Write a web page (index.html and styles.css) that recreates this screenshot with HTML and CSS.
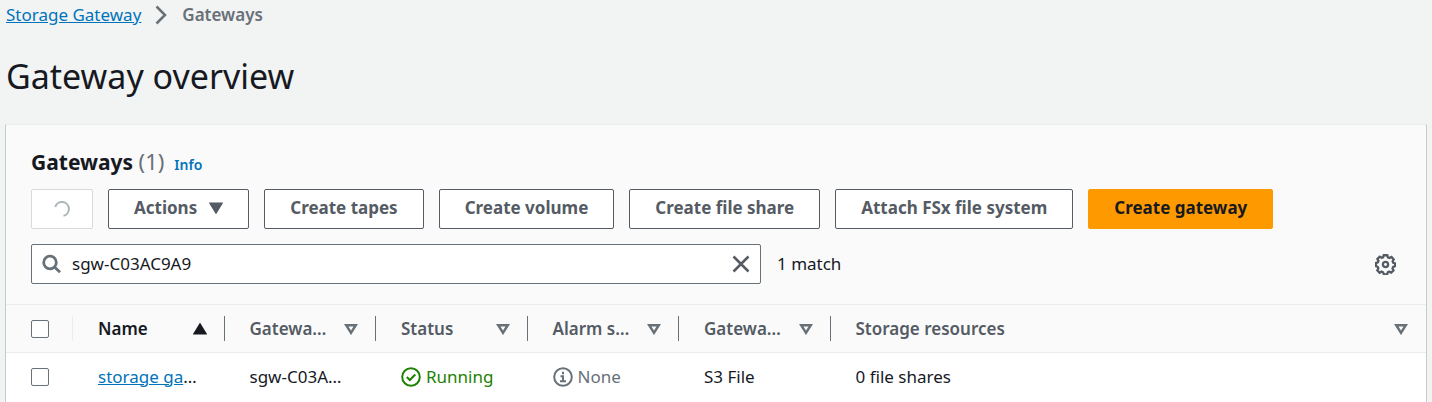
FILE: index.html
```html
<!DOCTYPE html>
<html lang="en">
<head>
<meta charset="utf-8">
<title>Gateway overview</title>
<link rel="stylesheet" href="styles.css">
</head>
<body>
<nav class="breadcrumbs" aria-label="Breadcrumbs">
  <a class="link" href="#">Storage Gateway</a>
  <svg class="chevron" viewBox="0 0 12 20" aria-hidden="true"><path d="M1.5 1.5 10 10 1.5 18.500"/></svg>
  <span class="current">Gateways</span>
</nav>
<h1 class="page-title">Gateway overview</h1>
<main class="panel">
  <header class="panel-header">
    <div class="heading">
      <h2 class="title">Gateways <span class="count">(1)</span></h2>
      <a class="info" href="#">Info</a>
    </div>
    <div class="actions">
      <button class="btn btn-loading" disabled aria-label="Refresh">
        <svg class="spinner" viewBox="0 0 16 16"><path d="M1.200 6A7 7 0 1 1 9.500 14.800"/></svg>
      </button>
      <button class="btn btn-menu">Actions <svg class="caret" viewBox="0 0 14 12"><path d="M1.500 1.500h11L7 10.500z" fill="currentColor"/></svg></button>
      <button class="btn">Create tapes</button>
      <button class="btn">Create volume</button>
      <button class="btn">Create file share</button>
      <button class="btn">Attach FSx file system</button>
      <button class="btn btn-primary">Create gateway</button>
    </div>
    <div class="filter">
      <div class="search">
        <svg class="search-icon" viewBox="0 0 20 20" aria-hidden="true"><circle cx="8" cy="8.500" r="6.300"/><path d="M12.500 13l5.500 5.200"/></svg>
        <input class="search-input" type="text" aria-label="Find gateways" value="sgw-C03AC9A9">
        <button class="icon-btn" aria-label="Clear"><svg class="close" viewBox="0 0 18 18"><path d="M1.500 1.500l15 15M16.500 1.500l-15 15"/></svg></button>
      </div>
      <span class="matches">1 match</span>
      <button class="icon-btn settings" aria-label="Preferences">
        <svg class="gear" viewBox="0 0 20 20"><path d="M8.300 1.200h3.400l.6 2 1.500.6 1.900-1 2.100 2.300-1 1.800.6 1.500 1.800.5v2.700l-1.900.7-.6 1.500.9 1.900-2.200 2.100-1.900-1-1.300.6-.6 2H8.400l-.7-2-1.500-.6-1.800 1-2.200-2.300 1-1.700-.6-1.600-1.800-.6V8.600l1.900-.6.6-1.500-1-1.700 2.200-2.200 1.800 1 1.400-.5z"/><circle cx="10" cy="10" r="2.500"/></svg>
      </button>
    </div>
  </header>
  <table class="grid">
    <colgroup><col class="col-check"><col class="col"><col class="col"><col class="col"><col class="col"><col class="col"><col></colgroup>
    <thead>
      <tr>
        <th class="check"><input class="box" type="checkbox" aria-label="Select all"></th>
        <th class="sorted"><div class="head">Name <svg class="caret" viewBox="0 0 14 12"><path d="M7 1.500l5.500 9h-11z" fill="currentColor"/></svg></div></th>
        <th><div class="head">Gatewa… <svg class="caret sort" viewBox="0 0 14 12"><path d="M2.200 2.200h9.600L7 9.800z"/></svg></div></th>
        <th><div class="head">Status <svg class="caret sort" viewBox="0 0 14 12"><path d="M2.200 2.200h9.600L7 9.800z"/></svg></div></th>
        <th><div class="head">Alarm s… <svg class="caret sort" viewBox="0 0 14 12"><path d="M2.200 2.200h9.600L7 9.800z"/></svg></div></th>
        <th><div class="head">Gatewa… <svg class="caret sort" viewBox="0 0 14 12"><path d="M2.200 2.200h9.600L7 9.800z"/></svg></div></th>
        <th><div class="head">Storage resources <svg class="caret sort" viewBox="0 0 14 12"><path d="M2.200 2.200h9.600L7 9.800z"/></svg></div></th>
      </tr>
    </thead>
    <tbody>
      <tr>
        <td class="check"><input class="box" type="checkbox" aria-label="Select gateway"></td>
        <td><a class="link" href="#">storage ga</a>…</td>
        <td>sgw-C03A…</td>
        <td><span class="status ok"><svg class="state" viewBox="0 0 20 20"><circle cx="10" cy="10" r="8.800"/><path d="M5.800 10l3 3 5.500-5.500"/></svg>Running</span></td>
        <td><span class="status none"><svg class="state" viewBox="0 0 20 20"><circle cx="10" cy="10" r="8.800"/><path d="M10 4.800v2.400M7.500 9.200H10v5M7 14.200h6"/></svg>None</span></td>
        <td>S3 File</td>
        <td>0 file shares</td>
      </tr>
    </tbody>
  </table>
</main>
</body>
</html>
```
FILE: styles.css
```css
* { box-sizing: border-box; }
body {
  margin: 0;
  padding: 4px 5px 0;
  background: #f2f3f3;
  color: #16191f;
  font: 17px/22px "Noto Sans", sans-serif;
}
svg { display: block; flex: none; fill: none; stroke: currentColor; stroke-width: 2; }
h1, h2 { margin: 0; }
.link { color: #0073bb; }
.breadcrumbs { display: flex; align-items: center; padding-left: 1px; }
.chevron { width: 12px; height: 20px; margin: 0 15px 0 14px; color: #687078; stroke-width: 2.500; }
.current { color: #687078; font-weight: 600; }
.page-title { padding: 28px 0 26px 1px; font-size: 34px; line-height: 44px; font-weight: 400; }
.panel { background: #fff; border: 1px solid #c5cccc; border-top-color: #eaeded; border-bottom: 0; min-height: 278px; }
.panel-header { padding: 21px 30px 20px 25px; background: #fafafa; }
.heading { display: flex; align-items: baseline; gap: 10px; line-height: 30px; }
.title { font-size: 21px; font-weight: 700; }
.count { color: #687078; font-size: 22px; font-weight: 400; }
.info { color: #0073bb; font-size: 14px; font-weight: 600; text-decoration: none; }
.actions { display: flex; flex-wrap: wrap; gap: 15px; margin: 9px 0 15px; }
.btn {
  display: flex; align-items: center; justify-content: center; height: 40px; padding: 0 25px 2px;
  border: 1px solid #545b64; border-radius: 2px; background: #fff; color: #545b64;
  font: 700 17px/22px "Noto Sans", sans-serif; white-space: nowrap;
}
.btn-loading { width: 62px; padding-bottom: 0; border-color: #d5dbdb; color: #aab7b8; }
.spinner { width: 16px; height: 16px; }
.btn-menu { gap: 12px; }
.caret { width: 14px; height: 12px; }
.sort { color: #687078; stroke-width: 2.500; }
.btn-primary { background: #ff9900; border-color: #ff9900; color: #16191f; }
.filter { display: flex; align-items: center; }
.search {
  display: flex; align-items: center; width: 730px; height: 40px; padding: 0 10px;
  border: 1px solid #687078; border-radius: 2px; background: #fff;
}
.search-icon { width: 20px; height: 20px; color: #687078; stroke-width: 2.800; }
.search-input { flex: 1; min-width: 0; padding: 0 10px; border: 0; outline: 0; background: none; color: #16191f; font: inherit; }
.icon-btn { padding: 0; border: 0; background: none; color: #545b64; }
.close { width: 18px; height: 18px; stroke-width: 2.500; }
.matches { margin-left: 16px; }
.settings { margin-left: auto; }
.gear { width: 21px; height: 21px; stroke-width: 2.200; }
.grid { width: 100%; table-layout: fixed; border-collapse: collapse; }
.col-check { width: 67px; }
.col { width: 10.67%; }
.grid tr { height: 48px; }
.grid th, .grid td { padding: 0 0 0 25px; text-align: left; white-space: nowrap; }
.grid th { height: 48px; background: #fafafa; border: solid #eaeded; border-width: 1px 0; color: #545b64; font-weight: 600; }
.grid th.sorted { color: #16191f; }
.head { display: flex; align-items: center; justify-content: space-between; height: 25px; padding-right: 17px; border-right: 1px solid #687078; }
th:last-child .head { border: 0; padding-right: 18px; }
.grid th.check { background: #fafafa linear-gradient(#eaeded, #eaeded) right / 1px 25px no-repeat; }
.box { appearance: none; display: block; width: 18px; height: 18px; margin: 0; border: 1px solid #687078; border-radius: 2px; background: #fff; }
.status { display: flex; align-items: center; gap: 5px; }
.state { width: 20px; height: 20px; }
.ok { color: #1d8102; }
.none { color: #687078; }
```
